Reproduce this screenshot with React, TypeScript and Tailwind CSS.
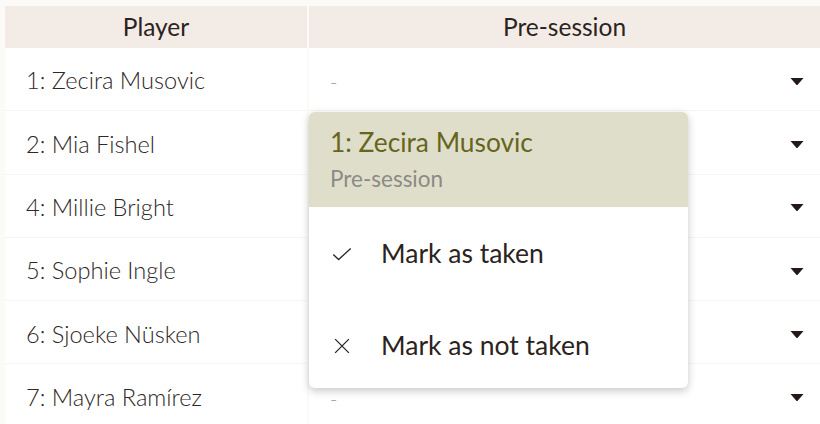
const players = [
  '1: Zecira Musovic',
  '2: Mia Fishel',
  '4: Millie Bright',
  '5: Sophie Ingle',
  '6: Sjoeke Nüsken',
  '7: Mayra Ramírez',
];

function Caret() {
  return (
    <svg className="w-[14px] h-[9px] text-[#231a17]" viewBox="0 0 14 9" fill="currentColor">
      <path d="M0.5 1h13l-5.6 6.6a1.2 1.2 0 0 1-1.8 0z" />
    </svg>
  );
}

export default function App() {
  return (
    <div
      className="relative w-[820px] h-[424px] overflow-hidden bg-[#fcfaf7] pt-[6px] pl-[5px]"
      style={{ fontFamily: 'Lato, "Noto Sans", sans-serif' }}
    >
      <div className="grid grid-cols-[302px_1fr] gap-x-[2px]">
        {/* header */}
        <div className="h-[42px] bg-[#f3ebe6] flex items-center justify-center text-[24.5px] font-normal text-[#2b2320]">
          Player
        </div>
        <div className="h-[42px] bg-[#f3ebe6] flex items-center justify-center text-[24.5px] font-normal text-[#2b2320]">
          Pre-session
        </div>

        {players.map((p) => (
          <div key={p} className="contents">
            <div className="h-[63.3px] bg-white border-b border-[#f8f4ef] flex items-center pt-[4px] pl-[21px] text-[23.6px] font-light text-[#2e2826]">
              {p}
            </div>
            <div className="h-[63.3px] bg-white border-b border-[#f8f4ef] flex items-center justify-between pt-[4px] pl-[21px] pr-[16px] text-[20px] font-light text-[#9a9592]">
              <span>-</span>
              <Caret />
            </div>
          </div>
        ))}
      </div>

      {/* dropdown menu */}
      <div className="absolute left-[309px] top-[112px] w-[379px] h-[276px] bg-white rounded-[6px] shadow-[0_3px_8px_rgba(0,0,0,0.22)] overflow-hidden">
        <div className="h-[95px] bg-[#dfdecb] pl-[21px] pt-[14px]">
          <div className="text-[26.3px] leading-[32px] text-[#66651c]">1: Zecira Musovic</div>
          <div className="text-[22.5px] leading-[26px] mt-[8px] text-[#8d8a85]">Pre-session</div>
        </div>
        <div className="flex flex-col">
          <div className="h-[92px] flex items-center pt-[2px] pl-[22px] text-[26.5px] font-normal text-[#2b2320]">
            <svg className="w-[22px] h-[22px] mr-[28px]" viewBox="0 0 24 24" fill="none" stroke="#2b2320" strokeWidth={1.4}>
              <path d="M2.5 12.5l5.8 5.5L21.5 6" />
            </svg>
            Mark as taken
          </div>
          <div className="h-[92px] flex items-center pt-[2px] pl-[22px] text-[26.5px] font-normal text-[#2b2320]">
            <svg className="w-[22px] h-[22px] mr-[28px]" viewBox="0 0 24 24" fill="none" stroke="#2b2320" strokeWidth={1.4}>
              <path d="M4.5 4.5l15 15M19.5 4.5l-15 15" />
            </svg>
            Mark as not taken
          </div>
        </div>
      </div>
    </div>
  );
}
